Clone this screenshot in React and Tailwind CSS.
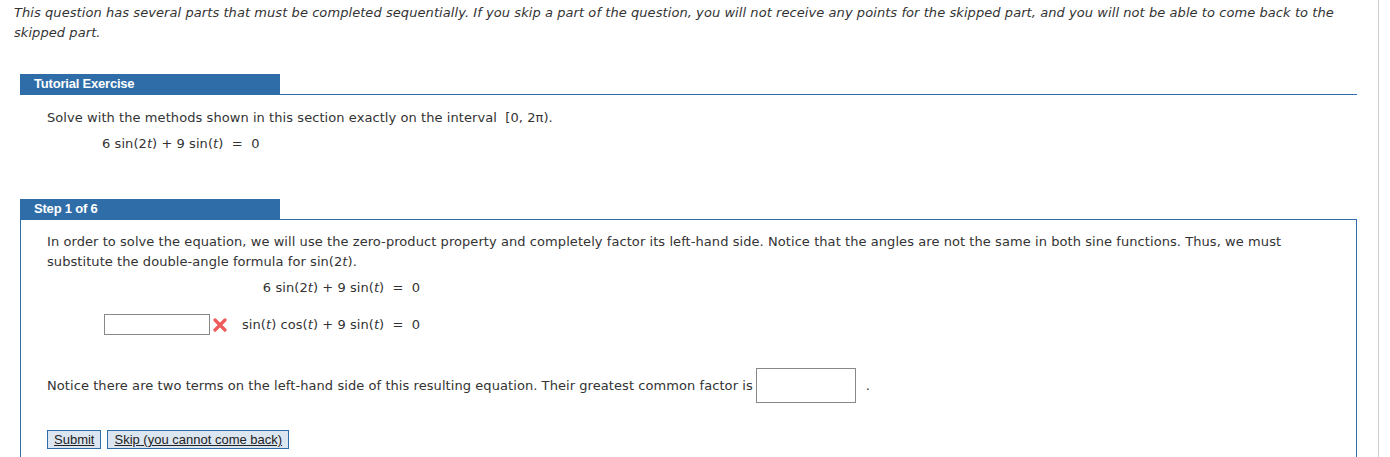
import React from 'react';

const T = () => <i>t</i>;

const SectionHeader = ({ children }) => (
  <div className="flex items-end">
    <div className="w-[260px] h-[20px] bg-[#2e6da8] pl-[14px] text-white font-bold text-[13px] leading-[20px] [font-family:'Liberation_Sans',Arial,sans-serif] tracking-[-0.2px]">
      {children}
    </div>
  </div>
);

const RedX = () => (
  <svg width="14" height="14" viewBox="0 0 14 14" className="block">
    <path d="M2 2 L12 12 M12 2 L2 12" stroke="#f05a5a" strokeWidth="3.2" strokeLinecap="round" />
  </svg>
);

export default function App() {
  return (
    <div className="relative w-[1390px] h-[457px] overflow-hidden bg-white text-[13px] text-[#333] tracking-[0.07px] [font-family:'DejaVu_Sans',Verdana,sans-serif]">
      <div className="absolute top-0 bottom-0 left-[1378px] w-px bg-[#cfcfcf]" />
      <div className="w-[1357px]">
        <p className="pl-[14px] pt-[3px] italic leading-[20px] pr-[20px]">
          This question has several parts that must be completed sequentially. If you skip a part of the question, you will not receive any points for the skipped part, and you will not be able to come back to the skipped part.
        </p>

        <div className="ml-[20px] mt-[31px]">
          <div className="border-b border-[#2e6da8]">
            <SectionHeader>Tutorial Exercise</SectionHeader>
          </div>
          <div className="pl-[27px] pt-[13px] leading-[20px]">
            <div>Solve with the methods shown in this section exactly on the interval &nbsp;[0, 2π).</div>
            <div className="pl-[55px] mt-[6px]">6 sin(2<T />) + 9 sin(<T />) &nbsp;=&nbsp; 0</div>
          </div>
        </div>

        <div className="ml-[20px] mt-[45px]">
          <SectionHeader>Step 1 of 6</SectionHeader>
          <div className="border border-[#2e6da8] h-[300px] pl-[26px] pr-[60px] pt-[12px] leading-[20px]">
            <p>
              In order to solve the equation, we will use the zero-product property and completely factor its left-hand side. Notice that the angles are not the same in both sine functions. Thus, we must substitute the double-angle formula for sin(2<T />).
            </p>
            <div className="ml-[57px] mt-[6px] grid grid-cols-[auto_auto] justify-start items-center">
              <div className="text-right pr-[4px]">6 sin(2<T />) + 9 sin(<T />)</div>
              <div>&nbsp;=&nbsp; 0</div>
              <div className="flex items-center justify-end pr-[4px] mt-[16px]">
                <input className="w-[106px] h-[21px] border border-[#888] bg-white" />
                <span className="ml-[3px] mr-[15px]"><RedX /></span>
                <span>sin(<T />) cos(<T />) + 9 sin(<T />)</span>
              </div>
              <div className="mt-[16px]">&nbsp;=&nbsp; 0</div>
            </div>
            <div className="flex items-center mt-[33px]">
              <span>Notice there are two terms on the left-hand side of this resulting equation. Their greatest common factor is</span>
              <input className="ml-[3px] w-[100px] h-[35px] border border-[#888] bg-white" />
              <span className="ml-[10px]">.</span>
            </div>
            <div className="flex gap-[6px] mt-[27px] [font-family:'Liberation_Sans',Arial,sans-serif] text-[13px] tracking-normal">
              <button className="h-[19px] px-[6px] bg-[#dce6f1] border border-[#2e6da8] underline leading-[17px] text-[#222]">Submit</button>
              <button className="h-[19px] px-[6px] bg-[#dce6f1] border border-[#2e6da8] underline leading-[17px] text-[#222]">Skip (you cannot come back)</button>
            </div>
          </div>
        </div>
      </div>
    </div>
  );
}
